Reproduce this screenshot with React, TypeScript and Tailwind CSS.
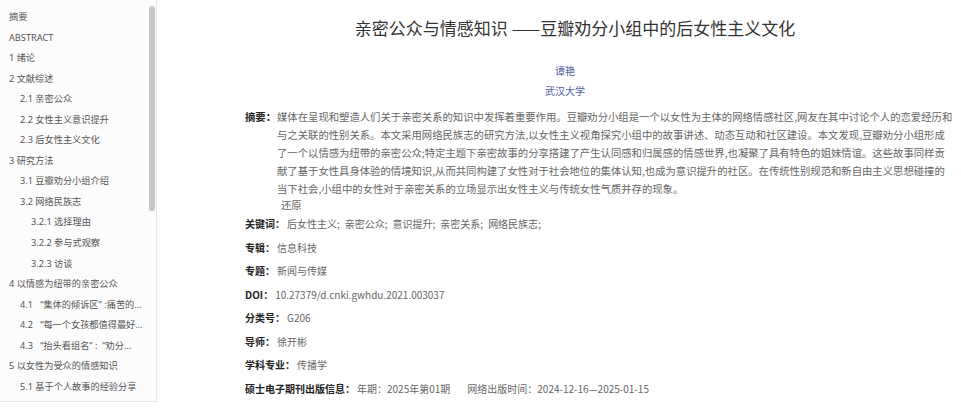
import React from "react";

type TocItem = { label: string; level: 0 | 1 | 2 };

const toc: TocItem[] = [
  { label: "摘要", level: 0 },
  { label: "ABSTRACT", level: 0 },
  { label: "1 绪论", level: 0 },
  { label: "2 文献综述", level: 0 },
  { label: "2.1 亲密公众", level: 1 },
  { label: "2.2 女性主义意识提升", level: 1 },
  { label: "2.3 后女性主义文化", level: 1 },
  { label: "3 研究方法", level: 0 },
  { label: "3.1 豆瓣劝分小组介绍", level: 1 },
  { label: "3.2 网络民族志", level: 1 },
  { label: "3.2.1 选择理由", level: 2 },
  { label: "3.2.2 参与式观察", level: 2 },
  { label: "3.2.3 访谈", level: 2 },
  { label: "4 以情感为纽带的亲密公众", level: 0 },
  { label: "4.1   “集体的倾诉区” :痛苦的...", level: 1 },
  { label: "4.2   “每一个女孩都值得最好...", level: 1 },
  { label: "4.3   “抬头看组名” :  “劝分...", level: 1 },
  { label: "5 以女性为受众的情感知识", level: 0 },
  { label: "5.1 基于个人故事的经验分享", level: 1 },
];

const indent = ["pl-[9px]", "pl-[20px]", "pl-[31px]"];

const abstractLines = [
  "媒体在呈现和塑造人们关于亲密关系的知识中发挥着重要作用。豆瓣劝分小组是一个以女性为主体的网络情感社区,网友在其中讨论个人的恋爱经历和",
  "与之关联的性别关系。本文采用网络民族志的研究方法,以女性主义视角探究小组中的故事讲述、动态互动和社区建设。本文发现,豆瓣劝分小组形成",
  "了一个以情感为纽带的亲密公众;特定主题下亲密故事的分享搭建了产生认同感和归属感的情感世界,也凝聚了具有特色的姐妹情谊。这些故事同样贡",
  "献了基于女性具身体验的情境知识,从而共同构建了女性对于社会地位的集体认知,也成为意识提升的社区。在传统性别规范和新自由主义思想碰撞的",
  "当下社会,小组中的女性对于亲密关系的立场显示出女性主义与传统女性气质并存的现象。",
];

const keywords = ["后女性主义", "亲密公众", "意识提升", "亲密关系", "网络民族志"];

const Row = ({ label, children }: { label: string; children: React.ReactNode }) => (
  <div className="flex items-center h-[23.5px]">
    <span className="font-bold text-[#222] whitespace-nowrap">{label}</span>
    <div className="ml-[2px] text-[#666] whitespace-nowrap flex">{children}</div>
  </div>
);

const Sidebar = () => (
  <div
    className="w-[157px] h-[402px] shrink-0 flex bg-[#fcfcfc] border-r border-b border-[#e8e8e8]"
    style={{ fontFamily: '"Noto Sans", "Noto Sans CJK SC", sans-serif' }}
  >
    <div className="w-[148px] pt-[7px] text-[9.2px] text-[#555]">
      {toc.map((t, i) => (
        <div key={i} className={`h-[20.55px] leading-[20.55px] pr-[4px] whitespace-pre ${indent[t.level]}`}>
          {t.label}
        </div>
      ))}
    </div>
    <div className="w-[8px] pt-[6px] flex justify-center">
      <div className="w-[6px] h-[205px] rounded-[3px] bg-[#c6c6c6]" />
    </div>
  </div>
);

export default function App() {
  return (
    <div
      className="w-[961px] h-[414px] bg-white flex overflow-hidden"
      style={{ fontFamily: '"Noto Sans CJK SC", "Noto Sans", sans-serif' }}
    >
      <Sidebar />
      <div className="flex-1 pl-[88px] pt-[16px] text-[10px]">
        <div className="w-[690px]">
          <h1 className="text-[17px] leading-[24px] text-[#333] text-center pr-[30px] font-normal">
            亲密公众与情感知识 ——豆瓣劝分小组中的后女性主义文化
          </h1>
          <div className="mt-[21px] pr-[50px] flex flex-col items-center text-[#4e5d9c] leading-[20px]">
            <span>谭艳</span>
            <span>武汉大学</span>
          </div>
          <div className="mt-[7px] flex text-[10.35px] leading-[18px]">
            <span className="font-bold text-[#222] whitespace-nowrap w-[32px] shrink-0">摘要：</span>
            <div className="text-[#666]">
              {abstractLines.map((l, i) => (
                <div key={i} className="whitespace-nowrap">{l}</div>
              ))}
              <div className="pl-[4px] leading-[14px]">还原</div>
            </div>
          </div>
          <div className="mt-[0px]">
            <Row label="关键词：">
              {keywords.map((k) => (
                <span key={k} className="mr-[5px]">{k};</span>
              ))}
            </Row>
            <Row label="专辑：">信息科技</Row>
            <Row label="专题：">新闻与传媒</Row>
            <Row label="DOI：">10.27379/d.cnki.gwhdu.2021.003037</Row>
            <Row label="分类号：">G206</Row>
            <Row label="导师：">徐开彬</Row>
            <Row label="学科专业：">传播学</Row>
            <Row label="硕士电子期刊出版信息：">
              <span>年期：2025年第01期</span>
              <span className="ml-[17px]">网络出版时间：2024-12-16—2025-01-15</span>
            </Row>
          </div>
        </div>
      </div>
    </div>
  );
}
